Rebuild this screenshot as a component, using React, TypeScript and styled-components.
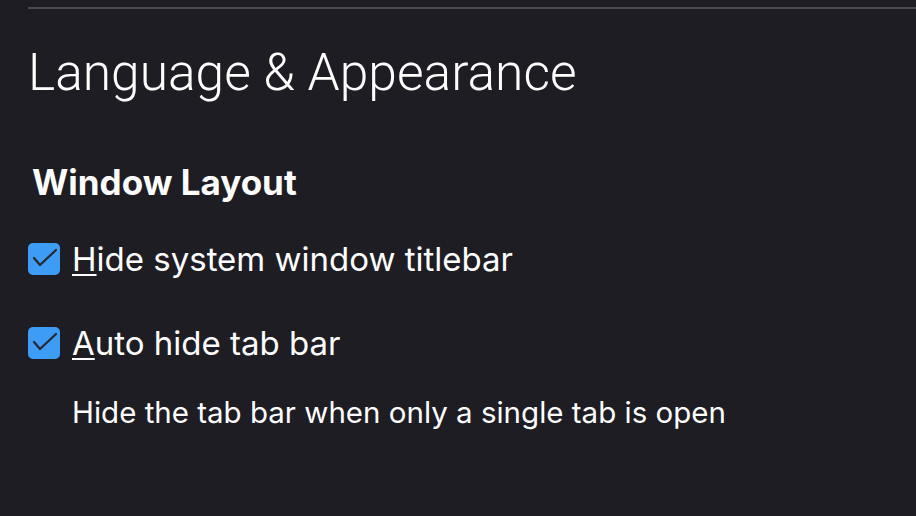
import React from "react";
import styled, { createGlobalStyle } from "styled-components";

const Global = createGlobalStyle`
  html, body { margin: 0; padding: 0; background: #1e1d23; }
  body { font-family: Inter, "Noto Sans", sans-serif; color: #ffffff; }
`;

const Page = styled.div`
  width: 916px;
  height: 516px;
  overflow: hidden;
  background: #1e1d23;
  padding: 7px 0 0 28px;
  box-sizing: border-box;
`;

const Rule = styled.div`
  height: 2px;
  background: #4a4a50;
`;

const Title = styled.h1`
  margin: 34px 0 0 0;
  font-family: Roboto, sans-serif;
  font-weight: 300;
  font-size: 51.5px;
  line-height: 60px;
  color: #ffffff;
`;

const Section = styled.h2`
  margin: 57px 0 0 4px;
  font-family: Inter, sans-serif;
  font-weight: 700;
  font-size: 35px;
  line-height: 44px;
  color: #ffffff;
`;

const Row = styled.label<{ $top: number }>`
  display: flex;
  align-items: center;
  gap: 12px;
  margin-top: ${(p) => p.$top}px;
`;

const Box = styled.span`
  width: 32px;
  height: 32px;
  border-radius: 5px;
  background: #3d9cf6;
  display: flex;
  align-items: center;
  justify-content: center;
  flex: none;
`;

const LabelText = styled.span`
  font-family: Inter, sans-serif;
  font-size: 33px;
  line-height: 40px;
  color: #ffffff;
`;

const Mnemonic = styled.span`
  text-decoration: underline;
  text-underline-offset: 3px;
  text-decoration-thickness: 2px;
`;

const Desc = styled.p`
  margin: 31px 0 0 44px;
  font-family: Inter, sans-serif;
  font-size: 29.5px;
  line-height: 36px;
  color: #ffffff;
`;

const Check = () => (
  <svg width="32" height="32" viewBox="0 0 32 32">
    <path d="M6 15 L12 22 L28 7" fill="none" stroke="#27272c" strokeWidth="2.2" strokeLinecap="round" strokeLinejoin="round" />
  </svg>
);

export default function App() {
  return (
    <>
      <Global />
      <Page>
        <Rule />
        <Title>Language &amp; Appearance</Title>
        <Section>Window Layout</Section>
        <Row $top={35}>
          <Box><Check /></Box>
          <LabelText><Mnemonic>H</Mnemonic>ide system window titlebar</LabelText>
        </Row>
        <Row $top={44}>
          <Box><Check /></Box>
          <LabelText><Mnemonic>A</Mnemonic>uto hide tab bar</LabelText>
        </Row>
        <Desc>Hide the tab bar when only a single tab is open</Desc>
      </Page>
    </>
  );
}
